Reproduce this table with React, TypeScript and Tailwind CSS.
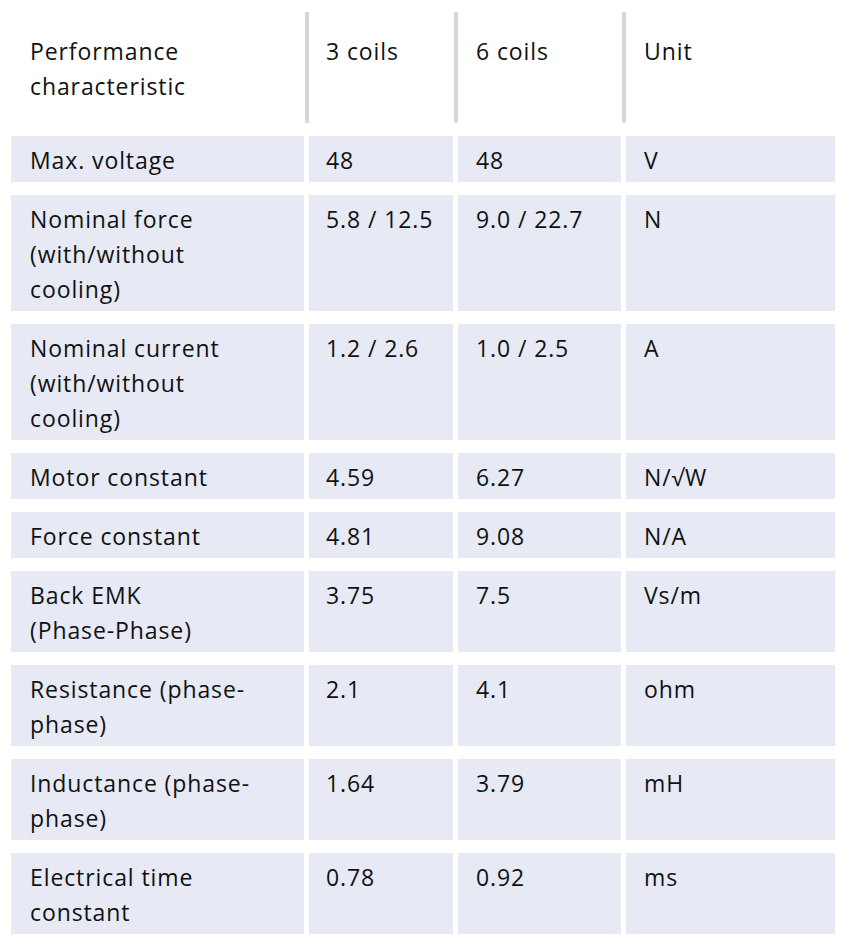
import React from 'react';

const ROWS: [string[], string, string, string][] = [
  [['Max. voltage'], '48', '48', 'V'],
  [['Nominal force', '(with/without', 'cooling)'], '5.8 / 12.5', '9.0 / 22.7', 'N'],
  [['Nominal current', '(with/without', 'cooling)'], '1.2 / 2.6', '1.0 / 2.5', 'A'],
  [['Motor constant'], '4.59', '6.27', 'N/√W'],
  [['Force constant'], '4.81', '9.08', 'N/A'],
  [['Back EMK', '(Phase-Phase)'], '3.75', '7.5', 'Vs/m'],
  [['Resistance (phase-', 'phase)'], '2.1', '4.1', 'ohm'],
  [['Inductance (phase-', 'phase)'], '1.64', '3.79', 'mH'],
  [['Electrical time', 'constant'], '0.78', '0.92', 'ms'],
];

const Sep = () => <div className="w-[4px] mx-auto h-full bg-[#d6d6d6]" />;

const App: React.FC = () => (
  <div
    className="w-[849px] h-[950px] bg-white pt-[12px] pl-[11px] text-[#111] text-[23px] leading-[35px] tracking-[0.9px]"
    style={{ fontFamily: '"Open Sans", sans-serif' }}
  >
    <div className="grid grid-cols-[293px_5px_144px_5px_163px_5px_209px] h-[111px]">
      <div className="pl-[19px] pt-[22px]">Performance<br />characteristic</div>
      <Sep />
      <div className="pl-[17px] pt-[22px]">3 coils</div>
      <Sep />
      <div className="pl-[18px] pt-[22px]">6 coils</div>
      <Sep />
      <div className="pl-[18px] pt-[22px]">Unit</div>
    </div>

    <div className="flex flex-col gap-[13px] mt-[13px]">
      {ROWS.map(([label, a, b, unit], i) => (
        <div key={i} className="grid grid-cols-[293px_144px_163px_209px] gap-x-[5px]">
          <div className="bg-[#e7e9f5] pl-[19px] pt-[7px] pb-[4px]">
            {label.map((l, j) => <div key={j}>{l}</div>)}
          </div>
          <div className="bg-[#e7e9f5] pl-[17px] pt-[7px] pb-[4px]">{a}</div>
          <div className="bg-[#e7e9f5] pl-[18px] pt-[7px] pb-[4px]">{b}</div>
          <div className="bg-[#e7e9f5] pl-[18px] pt-[7px] pb-[4px]">{unit}</div>
        </div>
      ))}
    </div>
  </div>
);

export default App;
